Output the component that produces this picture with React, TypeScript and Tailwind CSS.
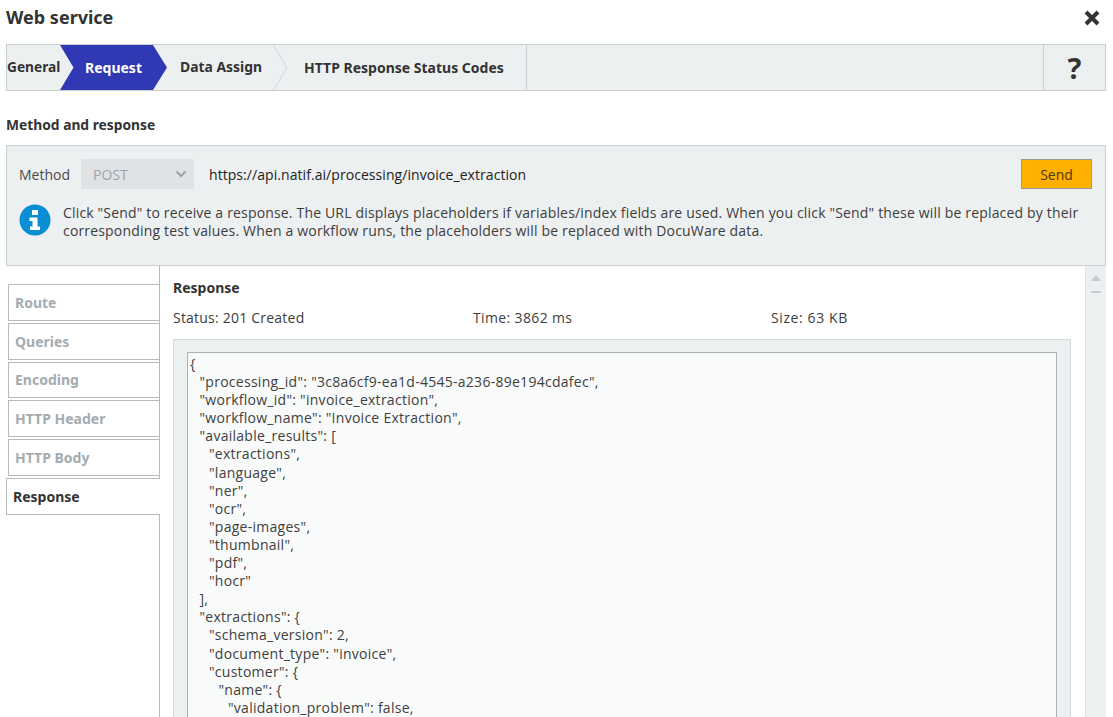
import React from "react";

const lines: [number, string][] = [
  [0, "{"],
  [1, '"processing_id": "3c8a6cf9-ea1d-4545-a236-89e194cdafec",'],
  [1, '"workflow_id": "invoice_extraction",'],
  [1, '"workflow_name": "Invoice Extraction",'],
  [1, '"available_results": ['],
  [2, '"extractions",'],
  [2, '"language",'],
  [2, '"ner",'],
  [2, '"ocr",'],
  [2, '"page-images",'],
  [2, '"thumbnail",'],
  [2, '"pdf",'],
  [2, '"hocr"'],
  [1, "],"],
  [1, '"extractions": {'],
  [2, '"schema_version": 2,'],
  [2, '"document_type": "invoice",'],
  [2, '"customer": {'],
  [3, '"name": {'],
  [4, '"validation_problem": false,'],
];

const sideTabs = ["Route", "Queries", "Encoding", "HTTP Header", "HTTP Body"];
const bold = "font-['Noto_Sans',sans-serif] font-bold";

export default function App() {
  return (
    <div className="w-[1113px] h-[717px] overflow-hidden bg-white text-[#333] font-['Open_Sans',sans-serif] text-[14px] flex flex-col">
      <div className="h-[44px] pl-[6px] pr-[12px] flex items-start justify-between shrink-0">
        <div className={`${bold} text-[18px] leading-[35px] text-[#333]`}>Web service</div>
        <svg className="mt-[9px]" width="18" height="18" viewBox="0 0 18 18">
          <path d="M3 3 L15 15 M15 3 L3 15" stroke="#333" strokeWidth="4" />
        </svg>
      </div>

      <div className="ml-[6px] mr-[7px] h-[47px] flex shrink-0">
        <div className="w-[1038px] flex border border-[#c8cfd2] border-b-[#ccd3c6] bg-[#edf0f1]">
          <div className={`${bold} text-[13.7px] h-full flex items-center w-[53px] text-[#333]`}>General</div>
          <div className={`${bold} text-[14px] h-full flex items-center w-[96px] pl-[25px] text-white relative`}>
            <svg className="absolute left-0 top-0" width="107" height="45" viewBox="0 0 107 45">
              <path d="M0 0 H93 L107 22.5 L93 45 H0 L13.5 22.5 Z" fill="#3038b3" />
            </svg>
            <span className="relative">Request</span>
          </div>
          <div className={`${bold} text-[13.9px] h-full flex items-center w-[118px] pl-[24px] text-[#333] relative`}>
            <span className="relative">Data Assign</span>
            <svg className="absolute -right-[14px] top-0" width="15" height="45" viewBox="0 0 15 45">
              <path d="M0.5 0 L14 22.5 L0.5 45" fill="none" stroke="#cfd5d8" />
            </svg>
          </div>
          <div className={`${bold} text-[14px] h-full flex items-center w-[253px] pl-[30px] text-[#333] border-r border-[#c8cfd2]`}>
            <span className="whitespace-nowrap">HTTP Response Status Codes</span>
          </div>
        </div>
        <div className="flex-1 border border-l-0 border-[#c8cfd2] bg-[#edf0f1] flex items-center justify-center">
          <span className={`${bold} text-[29px] leading-none text-[#333]`}>?</span>
        </div>
      </div>

      <div className={`${bold} text-[13.8px] px-[6px] mt-[24px] h-[20px] leading-[20px] shrink-0 text-[#333]`}>Method and response</div>
      <div className="h-[10px] shrink-0" />

      <div className="ml-[6px] mr-[7px] h-[121px] border border-[#c8cfd2] bg-[#edf0f1] shrink-0 pl-[12px] pr-[13px] pt-[13px]">
        <div className="flex items-center h-[30px]">
          <span className="w-[62px] text-[#4a4a4a]">Method</span>
          <div className="w-[113px] h-[30px] bg-[#dfe3e6] flex items-center justify-between pl-[12px] pr-[7px] text-[#9aa3a8]">
            <span>POST</span>
            <svg width="12" height="8" viewBox="0 0 12 8">
              <path d="M1.5 1.5 L6 6 L10.5 1.5" fill="none" stroke="#9aa3a8" strokeWidth="2" />
            </svg>
          </div>
          <span className="ml-[15px] text-[#222] tracking-[0.06px]">https://api.natif.ai/processing/invoice_extraction</span>
          <button className="ml-auto w-[71px] h-[30px] bg-[#ffb000] border border-[#9a9a8a] text-[#4a3a10]">Send</button>
        </div>
        <div className="flex mt-[15px]">
          <svg className="shrink-0" width="32" height="32" viewBox="0 0 32 32">
            <circle cx="16" cy="16" r="15.5" fill="#0a8ed3" />
            <rect x="13" y="6" width="6" height="5" fill="#fff" />
            <path d="M10.5 13.5 H18.5 V22.5 H21 V26 H11 V22.5 H13.5 V17 H10.5 Z" fill="#fff" />
          </svg>
          <p className="ml-[12px] leading-[18px] text-[#3d3d3d] w-[1030px] tracking-[0.17px]">
            Click "Send" to receive a response. The URL displays placeholders if variables/index fields are used. When you click "Send" these will be replaced by their corresponding test values. When a workflow runs, the placeholders will be replaced with DocuWare data.
          </p>
        </div>
      </div>

      <div className="flex-1 min-h-0 flex">
        <div className="w-[160px] shrink-0 border-r border-[#b5bcc0] pt-[18px] pl-[6px]">
          {sideTabs.map((t) => (
            <div key={t} className={`${bold} ml-[2px] h-[36.8px] mb-[2px] border border-r-0 border-[#b5bcc0] pl-[6px] flex items-center text-[14px] text-[#a3acb1]`}>{t}</div>
          ))}
          <div className={`${bold} -mr-px relative bg-white h-[37px] border border-r-0 border-[#b5bcc0] pl-[6px] flex items-center text-[14px] text-[#333]`}>Response</div>
        </div>

        <div className="flex-1 min-w-0 pl-[13px] pt-[12px]">
          <div className={`${bold} text-[14px] leading-[20px] text-[#333]`}>Response</div>
          <div className="flex mt-[10px] h-[20px] leading-[20px] text-[#3d3d3d]">
            <span className="w-[300px] tracking-[0.22px]">Status: 201 Created</span>
            <span className="w-[298px] tracking-[0.36px]">Time: 3862 ms</span>
            <span className="tracking-[0.6px]">Size: 63 KB</span>
          </div>
          <div className="mt-[11px] w-[898px] h-[400px] bg-[#edf0f1] border border-[#d5dadd] pt-[12px] pl-[13px] pr-[13px]">
            <div className="h-[400px] bg-[#f9fbfa] border border-[#aab2b6] pl-[2px] pt-[2px] text-[#404040] leading-[18.1px] tracking-[0.27px]">
              {lines.map(([lvl, text], i) => (
                <div key={i} className="whitespace-pre" style={{ paddingLeft: lvl * 9.5 }}>{text}</div>
              ))}
            </div>
          </div>
        </div>

        <div className="w-[21px] mr-[7px] shrink-0 bg-[#edf0f1] border-l border-[#dfe3e5] flex flex-col items-center pt-[9px]">
          <svg width="10" height="6" viewBox="0 0 10 6"><path d="M5 0 L10 6 H0 Z" fill="#c5cbce" /></svg>
          <div className="w-[10px] h-[2px] bg-[#c5cbce] mt-[10px]" />
        </div>
      </div>
    </div>
  );
}
